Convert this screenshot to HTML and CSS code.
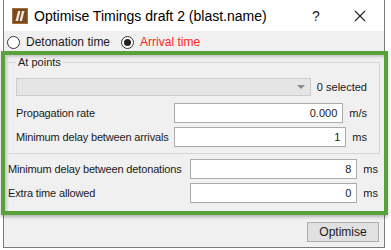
FILE: index.html
```html
<!DOCTYPE html>
<html lang="en">
<head>
    <meta charset="UTF-8">
    <meta name="viewport" content="width=device-width, initial-scale=1.0">
    <title>Optimise Timings</title>
    <link rel="stylesheet" href="styles.css">
</head>
<body>
<div class="window">
    <div class="titlebar">
        <span class="app-icon">
            <svg width="16" height="16" viewBox="0 0 16 16">
                <rect x="0.5" y="0.5" width="15" height="15" fill="#7a4a1c" stroke="#a07040"/>
                <polygon points="6,3 8.5,3 6,13 3.5,13" fill="#e8e2da"/>
                <polygon points="10,3 12.5,3 10,13 7.5,13" fill="#e8e2da"/>
            </svg>
        </span>
        <span class="title">Optimise Timings draft 2 (blast.name)</span>
        <span class="help">?</span>
        <span class="close">
            <svg width="12" height="12" viewBox="0 0 12 12">
                <path d="M1 1 L11 11 M11 1 L1 11" stroke="#222" stroke-width="1.1"/>
            </svg>
        </span>
    </div>

    <div class="mode-row">
        <label class="radio"><span class="radio-dot"></span>Detonation time</label>
        <label class="radio checked"><span class="radio-dot"></span><span class="active">Arrival time</span></label>
    </div>

    <div class="highlight">
        <fieldset class="group">
            <legend>At points</legend>
            <div class="combo-row">
                <div class="combo"><span class="arrow"></span></div>
                <span class="count">0 selected</span>
            </div>
            <div class="field-row">
                <span class="label">Propagation rate</span>
                <span class="input">0.000</span>
                <span class="unit">m/s</span>
            </div>
            <div class="field-row">
                <span class="label">Minimum delay between arrivals</span>
                <span class="input">1</span>
                <span class="unit">ms</span>
            </div>
        </fieldset>

        <div class="field-row outer">
            <span class="label">Minimum delay between detonations</span>
            <span class="input">8</span>
            <span class="unit">ms</span>
        </div>
        <div class="field-row outer">
            <span class="label">Extra time allowed</span>
            <span class="input">0</span>
            <span class="unit">ms</span>
        </div>
    </div>

    <div class="footer">
        <button class="btn">Optimise</button>
    </div>
</div>
</body>
</html>
```

FILE: styles.css
```css
* {
    margin: 0;
    padding: 0;
    box-sizing: border-box;
}

body {
    background: #ffffff;
    font-family: "Liberation Sans", Arial, sans-serif;
    font-size: 11px;
    color: #1a1a1a;
    white-space: nowrap;
}

.window {
    margin-left: 3px;
    width: 382px;
    height: 248px;
    background: #f0f0f0;
    border: 1px solid #7a7a7a;
    border-top: none;
}

/* title bar */
.titlebar {
    height: 31px;
    background: #ffffff;
    display: flex;
    align-items: center;
    padding-left: 8px;
}
.app-icon {
    width: 16px;
    height: 16px;
    display: flex;
}
.title {
    margin-left: 6px;
    font-size: 14px;
    color: #000;
}
.help {
    margin-left: auto;
    font-size: 14px;
    width: 12px;
    text-align: center;
}
.close {
    width: 12px;
    height: 12px;
    display: flex;
    margin: 0 18px 0 32px;
}

/* radio buttons */
.mode-row {
    height: 20px;
    display: flex;
    align-items: center;
    padding-left: 3px;
    padding-top: 2px;
    font-size: 12px;
}
.radio {
    display: flex;
    align-items: center;
    margin-right: 11px;
}
.radio-dot {
    width: 13px;
    height: 13px;
    border: 1px solid #333;
    border-radius: 50%;
    background: #fff;
    margin-right: 6px;
    display: flex;
    align-items: center;
    justify-content: center;
}
.checked .radio-dot::after {
    content: "";
    width: 7px;
    height: 7px;
    border-radius: 50%;
    background: #222;
}
.active {
    color: #ff1e1e;
}

/* green highlight frame */
.highlight {
    margin: 0 -4px 0 -3px;
    border: 4px solid #58a23b;
    padding: 0 6px 8px 1px;
    box-shadow: inset 2px 2px 3px rgba(0, 0, 0, 0.18), 0 2px 3px rgba(0, 0, 0, 0.25);
}

.group {
    border: 1px solid #d6d6d6;
    margin-right: -2px;
    padding: 0 12px 6px 9px;
}
.group legend {
    padding: 0 2px;
    line-height: 14px;
}

.combo-row {
    display: flex;
    align-items: center;
    margin-top: 9px;
}
.combo {
    flex: 1;
    height: 18px;
    background: #e5e5e5;
    border: 1px solid #cccccc;
    display: flex;
    align-items: center;
    justify-content: flex-end;
    padding-right: 5px;
}
.arrow {
    width: 0;
    height: 0;
    border-left: 4px solid transparent;
    border-right: 4px solid transparent;
    border-top: 4px solid #8a8a8a;
}
.count {
    margin-left: 6px;
}

.field-row {
    display: flex;
    align-items: center;
    margin-top: 4px;
}
.combo-row + .field-row {
    margin-top: 7px;
}
.field-row .label {
    width: 158px;
    flex-shrink: 0;
    letter-spacing: -0.15px;
}
.field-row .input {
    flex: 1;
    height: 20px;
    background: #fff;
    border: 1px solid #ababab;
    text-align: right;
    padding-right: 5px;
    line-height: 18px;
}
.field-row .unit {
    margin-left: 6px;
}

.field-row.outer {
    padding-left: 2px;
}
.group + .field-row.outer {
    margin-top: 5px;
}
.field-row.outer .label {
    width: 182px;
}

/* footer */
.footer {
    display: flex;
    justify-content: flex-end;
    padding: 7px 5px 0 0;
}
.btn {
    width: 72px;
    height: 20px;
    background: #e1e1e1;
    border: 1px solid #adadad;
    font-family: inherit;
    font-size: 12px;
    color: #1a1a1a;
}
```
